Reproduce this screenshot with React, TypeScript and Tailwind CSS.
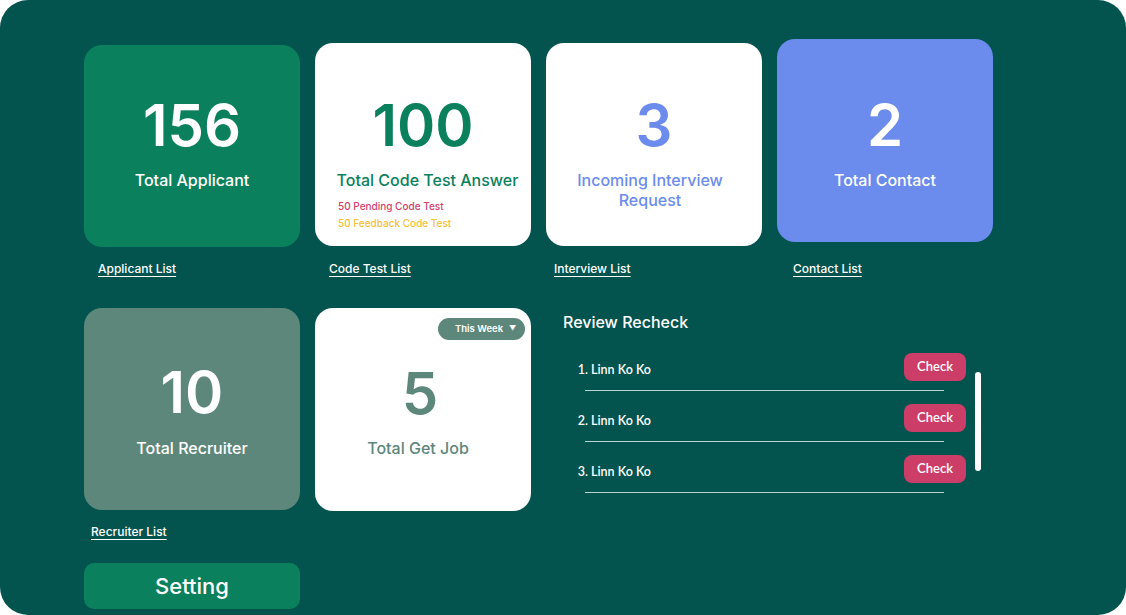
import React from 'react';

const font = { fontFamily: 'Inter, "Noto Sans", sans-serif' };

type StatProps = {
  value: string;
  label: React.ReactNode;
  box: string;
  numColor: string;
  labelColor: string;
  children?: React.ReactNode;
};

const StatCard: React.FC<StatProps> = ({ value, label, box, numColor, labelColor, children }) => (
  <div className={`flex flex-col items-center rounded-[18px] ${box}`}>
    <div className={`text-[58px] leading-none font-semibold ${numColor}`}>{value}</div>
    <div className={`mt-[16px] text-[16px] leading-[20px] font-medium text-center ${labelColor}`}>{label}</div>
    {children}
  </div>
);

const ListLink: React.FC<{ text: string; pad: string }> = ({ text, pad }) => (
  <a className={`mt-[14px] block text-[12px] leading-[16px] font-medium text-white underline underline-offset-[3px] ${pad}`}>
    {text}
  </a>
);

const reviews = ['Linn Ko Ko', 'Linn Ko Ko', 'Linn Ko Ko'];

export default function App() {
  return (
    <div className="w-[1126px] h-[615px] bg-white" style={font}>
      <div className="h-full rounded-[28px] bg-[#03534F] pl-[84px] pt-[39px]">
        {/* top row */}
        <div className="grid grid-cols-[216px_216px_216px_216px] gap-x-[15px] items-start">
          <div>
            <StatCard
              value="156"
              label="Total Applicant"
              box="mt-[6px] h-[202px] pt-[51px] bg-[#0B805D]"
              numColor="text-white"
              labelColor="text-white"
            />
            <ListLink text="Applicant List" pad="ml-[14px]" />
          </div>
          <div>
            <StatCard
              value="100"
              label="Total Code Test Answer"
              box="mt-[4px] h-[203px] pt-[53px] bg-white"
              numColor="text-[#0B805D]"
              labelColor="text-[#0B805D] ml-[9px]"
            >
              <div className="self-start pl-[23px] mt-[8px] text-[10px] leading-[17px] font-medium">
                <div className="text-[#D2416B]">50 Pending Code Test</div>
                <div className="text-[#F7C035]">50 Feedback Code Test</div>
              </div>
            </StatCard>
            <ListLink text="Code Test List" pad="ml-[14px] mt-[15px]" />
          </div>
          <div>
            <StatCard
              value="3"
              label={
                <>
                  Incoming Interview
                  <br />
                  Request
                </>
              }
              box="mt-[4px] h-[203px] pt-[53px] bg-white"
              numColor="text-[#6B8CEC]"
              labelColor="text-[#6B8CEC] leading-[19px] mr-[8px]"
            />
            <ListLink text="Interview List" pad="ml-[8px] mt-[15px]" />
          </div>
          <div>
            <StatCard
              value="2"
              label="Total Contact"
              box="h-[203px] pt-[57px] bg-[#6B8CEC]"
              numColor="text-white"
              labelColor="text-white"
            />
            <ListLink text="Contact List" pad="ml-[16px] mt-[19px]" />
          </div>
        </div>

        {/* second row */}
        <div className="mt-[31px] grid grid-cols-[216px_216px_450px] gap-x-[15px] items-start">
          <div>
            <div className="h-[202px] pt-[55px] rounded-[18px] bg-[#5E877C] flex flex-col items-center">
              <div className="text-[58px] leading-none font-semibold text-white">10</div>
              <div className="mt-[17px] text-[16px] leading-[20px] font-medium text-white">Total Recruiter</div>
            </div>
            <ListLink text="Recruiter List" pad="ml-[7px] mt-[14px]" />
            <button className="mt-[23px] w-[216px] h-[46px] rounded-[10px] bg-[#0B805D] text-white text-[22px] font-medium">
              Setting
            </button>
          </div>
          <div className="h-[203px] rounded-[18px] bg-white flex flex-col items-center">
            <div className="self-end mt-[10px] mr-[6px] h-[22px] w-[87px] rounded-[11px] bg-[#5E877C] flex items-center pl-[17px] gap-[6px] text-white text-[9.5px] font-semibold">
              <span>This Week</span>
              <span className="text-[7px]">▼</span>
            </div>
            <div className="mt-[24px] mr-[6px] text-[58px] leading-none font-semibold text-[#5E877C]">5</div>
            <div className="mt-[16px] mr-[10px] text-[16px] leading-[20px] font-medium text-[#5E877C]">Total Get Job</div>
          </div>

          {/* review recheck */}
          <div className="pl-[2px] pt-[3px]">
            <div className="ml-[15px] text-[16px] leading-[22px] font-medium text-white">Review Recheck</div>
            <div className="mt-[20px] flex items-start">
              <ol className="shrink-0 list-decimal pl-[43px] w-[418px] text-white" style={{ fontFamily: 'Lato, Inter, sans-serif' }}>
                {reviews.map((name, i) => (
                  <li key={i} className={`text-[12.5px] font-semibold ${i > 0 ? 'mt-[13px]' : ''}`}>
                    <div className="flex items-center justify-between h-[28px]">
                      <span className="mt-[6px]">{name}</span>
                      <button className="w-[62px] h-[28px] rounded-[8px] bg-[#CC3D68] text-white text-[13px] font-semibold">
                        Check
                      </button>
                    </div>
                    <div className="mt-[9px] -ml-[6px] w-[359px] h-px bg-[#B9D4CE]" />
                  </li>
                ))}
              </ol>
              <div className="shrink-0 ml-[9px] mt-[19px] w-[6px] h-[99px] rounded-full bg-white" />
            </div>
          </div>
        </div>
      </div>
    </div>
  );
}
